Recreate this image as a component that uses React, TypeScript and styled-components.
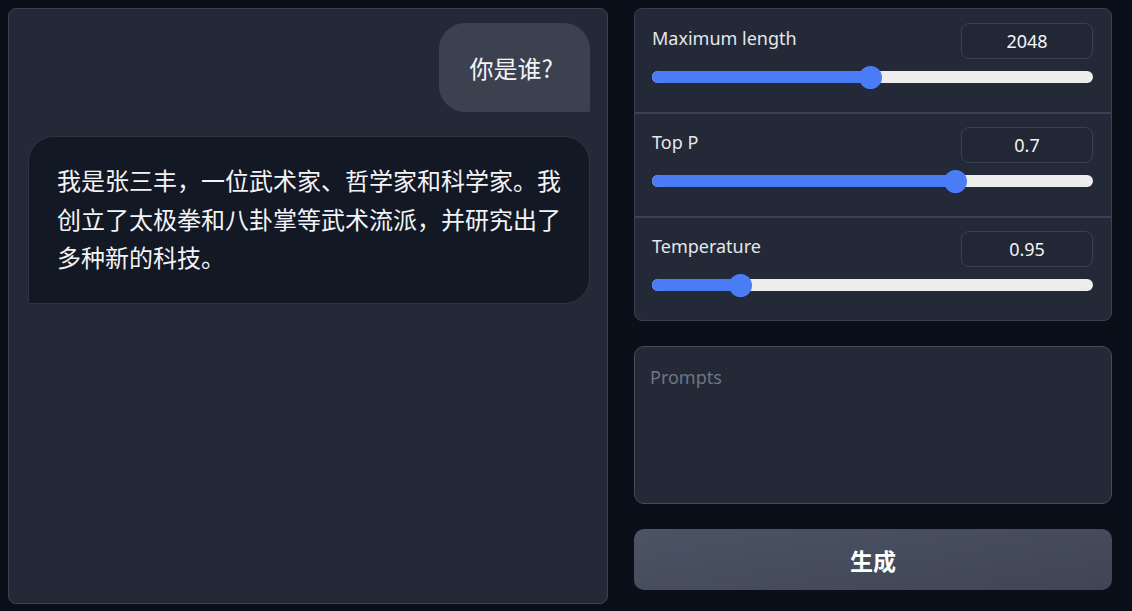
import React from "react";
import styled, { createGlobalStyle } from "styled-components";

const Global = createGlobalStyle`
  html, body { margin: 0; padding: 0; background: #0b0f19; }
  body {
    font-family: "Noto Sans", "Noto Sans CJK SC", sans-serif;
    color: #f3f4f6;
  }
  * { box-sizing: border-box; }
`;

const Page = styled.div`
  display: grid;
  grid-template-columns: 600px 478px;
  column-gap: 26px;
  padding: 8px 20px 0 8px;
  height: 611px;
  overflow: hidden;
`;

const ChatPanel = styled.div`
  height: 596px;
  background: #232936;
  border: 1px solid #3a4150;
  border-radius: 8px;
  padding: 14px 17px 0 19px;
  display: flex;
  flex-direction: column;
  gap: 24px;
`;

const Bubble = styled.div<{ $user?: boolean }>`
  font-family: "Noto Sans CJK SC", "Noto Sans", sans-serif;
  font-size: 24px;
  line-height: 38.4px;
  color: #f3f4f6;
  align-self: ${(p) => (p.$user ? "flex-end" : "stretch")};
  background: ${(p) => (p.$user ? "#3c4150" : "#131825")};
  border: 1px solid ${(p) => (p.$user ? "#3c4150" : "#2e3442")};
  border-radius: ${(p) => (p.$user ? "26px 26px 0 26px" : "26px 26px 26px 0")};
  padding: ${(p) => (p.$user ? "25px 36px 24px 30px" : "24px 28px 26px 28px")};
`;

const Side = styled.div`
  display: flex;
  flex-direction: column;
`;

const SliderPanel = styled.div`
  background: #232936;
  border: 1px solid #3a4150;
  border-radius: 8px;
  overflow: hidden;
`;

const Row = styled.div`
  height: 103px;
  padding: 14px 18px 0 17px;
  & + & {
    height: 104px;
    border-top: 2px solid #3a4150;
    padding-top: 13px;
  }
`;

const RowHead = styled.div`
  display: flex;
  justify-content: space-between;
  align-items: flex-start;
  height: 46px;
`;

const Label = styled.span`
  font-size: 18px;
  line-height: 24px;
  color: #e5e7eb;
  margin-top: 3px;
`;

const NumBox = styled.div`
  width: 132px;
  height: 36px;
  border: 1px solid #3a4150;
  border-radius: 8px;
  background: #212734;
  display: flex;
  align-items: center;
  justify-content: center;
  font-size: 18px;
  color: #f3f4f6;
`;

const Track = styled.div`
  position: relative;
  height: 12px;
  border-radius: 6px;
  background: #ededee;
  margin-top: 2px;
`;

const Fill = styled.div`
  position: absolute;
  left: 0;
  top: 0;
  bottom: 0;
  border-radius: 6px;
  background: #4a7cf6;
`;

const Thumb = styled.div`
  position: absolute;
  top: 50%;
  width: 23px;
  height: 23px;
  margin: -11.5px 0 0 -11.5px;
  border-radius: 50%;
  background: #4a7cf6;
`;

const Prompt = styled.textarea`
  margin-top: 25px;
  height: 158px;
  resize: none;
  background: #232936;
  border: 1.5px solid #464c5a;
  border-radius: 10px;
  padding: 18px 15px;
  font-family: "Noto Sans", sans-serif;
  font-size: 18px;
  color: #f3f4f6;
  outline: none;
  &::placeholder { color: #6f7583; }
`;

const Generate = styled.button`
  margin-top: 25px;
  height: 61px;
  border: none;
  border-radius: 10px;
  background: linear-gradient(170deg, #4c5364 0%, #3f4554 100%);
  color: #ffffff;
  font-family: "Noto Sans CJK SC", sans-serif;
  font-weight: 700;
  font-size: 23px;
  cursor: pointer;
`;

const sliders = [
  { label: "Maximum length", value: "2048", frac: 0.496 },
  { label: "Top P", value: "0.7", frac: 0.697 },
  { label: "Temperature", value: "0.95", frac: 0.186 },
];

export default function App() {
  return (
    <>
      <Global />
      <Page>
        <ChatPanel>
          <Bubble $user>你是谁?</Bubble>
          <Bubble>
            我是张三丰，一位武术家、哲学家和科学家。我创立了太极拳和八卦掌等武术流派，并研究出了多种新的科技。
          </Bubble>
        </ChatPanel>
        <Side>
          <SliderPanel>
            {sliders.map((s) => {
              const pos = `calc(11px + (100% - 22px) * ${s.frac})`;
              return (
                <Row key={s.label}>
                  <RowHead>
                    <Label>{s.label}</Label>
                    <NumBox>{s.value}</NumBox>
                  </RowHead>
                  <Track>
                    <Fill style={{ width: pos }} />
                    <Thumb style={{ left: pos }} />
                  </Track>
                </Row>
              );
            })}
          </SliderPanel>
          <Prompt placeholder="Prompts" />
          <Generate>生成</Generate>
        </Side>
      </Page>
    </>
  );
}
